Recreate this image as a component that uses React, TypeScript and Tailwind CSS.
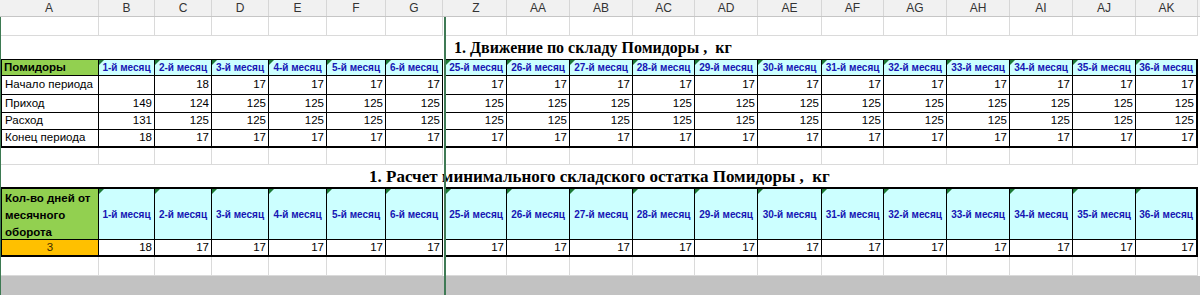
import React from "react";

type Col = { id: string; w: string; hw: string; month: string };

const leftCols: Col[] = [
  { id: "A", w: "w-[98px]", hw: "w-[99px]", month: "" },
  { id: "B", w: "w-[56px]", hw: "w-[56px]", month: "1-й месяц" },
  { id: "C", w: "w-[57px]", hw: "w-[57px]", month: "2-й месяц" },
  { id: "D", w: "w-[57px]", hw: "w-[57px]", month: "3-й месяц" },
  { id: "E", w: "w-[58px]", hw: "w-[58px]", month: "4-й месяц" },
  { id: "F", w: "w-[59px]", hw: "w-[59px]", month: "5-й месяц" },
  { id: "G", w: "w-[57px]", hw: "w-[57px]", month: "6-й месяц" },
];

const rightCols: Col[] = [
  { id: "Z", w: "w-[61px]", hw: "w-[61px]", month: "25-й месяц" },
  { id: "AA", w: "w-[63px]", hw: "w-[63px]", month: "26-й месяц" },
  { id: "AB", w: "w-[63px]", hw: "w-[63px]", month: "27-й месяц" },
  { id: "AC", w: "w-[62px]", hw: "w-[62px]", month: "28-й месяц" },
  { id: "AD", w: "w-[63px]", hw: "w-[63px]", month: "29-й месяц" },
  { id: "AE", w: "w-[64px]", hw: "w-[64px]", month: "30-й месяц" },
  { id: "AF", w: "w-[62px]", hw: "w-[62px]", month: "31-й месяц" },
  { id: "AG", w: "w-[63px]", hw: "w-[63px]", month: "32-й месяц" },
  { id: "AH", w: "w-[63px]", hw: "w-[63px]", month: "33-й месяц" },
  { id: "AI", w: "w-[63px]", hw: "w-[63px]", month: "34-й месяц" },
  { id: "AJ", w: "w-[63px]", hw: "w-[63px]", month: "35-й месяц" },
  { id: "AK", w: "w-[62px]", hw: "w-[62px]", month: "36-й месяц" },
];

const rep = (v: string, n: number) => Array.from({ length: n }, () => v);

// table 1 values, columns B..G then Z..AK
const movement = [
  { label: "Начало периода", values: ["", "18", ...rep("17", 16)] },
  { label: "Приход", values: ["149", "124", ...rep("125", 16)] },
  { label: "Расход", values: ["131", ...rep("125", 17)] },
  { label: "Конец периода", values: ["18", ...rep("17", 17)] },
];
const heights = ["h-[19px]", "h-[18px]", "h-[17px]", "h-[18px]"];

const minStock = ["18", ...rep("17", 17)];

function Corner() {
  return (
    <svg className="absolute left-0 top-0" width="5" height="5" viewBox="0 0 5 5">
      <polygon points="0,0 5,0 0,5" fill="#1d7a36" />
    </svg>
  );
}

// splits a row into left pane, freeze gap and right pane
function Panes({
  h,
  render,
}: {
  h: string;
  render: (col: Col, i: number, isLast: boolean) => React.ReactNode;
}) {
  return (
    <div className={`flex ${h}`}>
      {leftCols.map((c, i) => render(c, i, false))}
      <div className="w-[3px] shrink-0" />
      {rightCols.map((c, i) => render(c, i + leftCols.length, i === rightCols.length - 1))}
    </div>
  );
}

function GridRow({ h }: { h: string }) {
  return (
    <Panes
      h={h}
      render={(c) => (
        <div key={c.id} className={`${c.w} shrink-0 border-r border-b border-[#dadada]`} />
      )}
    />
  );
}

function TitleRow({ h, pad, size, text }: { h: string; pad: string; size: string; text: string }) {
  return (
    <div className={`${h} flex items-center ${pad}`}>
      <span
        className={`font-['Liberation_Serif','Times_New_Roman',serif] ${size} font-bold text-black whitespace-pre leading-none`}
      >
        {text}
      </span>
    </div>
  );
}

export default function App() {
  return (
    <div className="relative w-[1200px] h-[295px] overflow-hidden bg-white font-['Liberation_Sans',Arial,sans-serif] text-[11.5px] text-black">
      {/* Column letters */}
      <div className="flex h-[17px] bg-[#f1f1f1] border-b border-[#c6c6c6]">
        {leftCols.map((c) => (
          <div
            key={c.id}
            className={`${c.hw} shrink-0 border-r border-[#d6d6d6] flex items-center justify-center text-[12px] text-[#333]`}
          >
            {c.id}
          </div>
        ))}
        <div className="w-[3px] shrink-0" />
        {rightCols.map((c) => (
          <div
            key={c.id}
            className={`${c.hw} shrink-0 border-r border-[#d6d6d6] flex items-center justify-center text-[12px] text-[#333]`}
          >
            {c.id}
          </div>
        ))}
      </div>

      <div className="border-l border-[#3d7a52]">
        <GridRow h="h-[19px]" />
        <TitleRow
          h="h-[23px]"
          pad="pl-[453px]"
          size="text-[16px]"
          text="1. Движение по складу Помидоры ,  кг"
        />

        {/* Table 1 header */}
        <Panes
          h="h-[17px]"
          render={(c, i, last) =>
            i === 0 ? (
              <div
                key={c.id}
                className={`${c.w} shrink-0 bg-[#92d050] border border-black font-bold flex items-center pl-[2px]`}
              >
                Помидоры
              </div>
            ) : (
              <div
                key={c.id}
                className={`relative ${c.w} shrink-0 bg-[#ccffff] border-t border-b border-black ${
                  last ? "border-r-2" : "border-r"
                } flex items-center justify-center text-[10px] font-bold text-[#1616b4] whitespace-nowrap`}
              >
                <Corner />
                {c.month}
              </div>
            )
          }
        />

        {/* Table 1 body */}
        {movement.map((row, r) => (
          <Panes
            key={row.label}
            h={heights[r]}
            render={(c, i, last) => {
              const bottom = r === movement.length - 1 ? "border-b-2" : "border-b";
              if (i === 0)
                return (
                  <div
                    key={c.id}
                    className={`${c.w} shrink-0 border-l border-r ${bottom} border-black flex items-center pl-[3px] whitespace-nowrap`}
                  >
                    {row.label}
                  </div>
                );
              return (
                <div
                  key={c.id}
                  className={`${c.w} shrink-0 ${last ? "border-r-2" : "border-r"} ${bottom} border-black flex items-center justify-end pr-[2px]`}
                >
                  {row.values[i - 1]}
                </div>
              );
            }}
          />
        ))}

        <GridRow h="h-[17px]" />
        <TitleRow
          h="h-[22px]"
          pad="pl-[368px]"
          size="text-[17px]"
          text="1. Расчет минимального складского остатка Помидоры ,  кг"
        />

        {/* Table 2 header */}
        <Panes
          h="h-[53px]"
          render={(c, i, last) =>
            i === 0 ? (
              <div
                key={c.id}
                className={`${c.w} shrink-0 bg-[#92d050] border-l border-r border-t-2 border-b border-black font-bold leading-[17px] pl-[3px] pt-[1px]`}
              >
                Кол-во дней от
                <br />
                месячного
                <br />
                оборота
              </div>
            ) : (
              <div
                key={c.id}
                className={`relative ${c.w} shrink-0 bg-[#ccffff] border-t-2 border-b ${
                  last ? "border-r-2" : "border-r"
                } border-black flex items-center justify-center text-[10px] font-bold text-[#1616b4] whitespace-nowrap`}
              >
                <Corner />
                {c.month}
              </div>
            )
          }
        />

        {/* Table 2 body */}
        <Panes
          h="h-[17px]"
          render={(c, i, last) =>
            i === 0 ? (
              <div
                key={c.id}
                className={`${c.w} shrink-0 bg-[#ffc000] border-l border-r border-b-2 border-black flex items-center justify-center text-[#3d2800]`}
              >
                3
              </div>
            ) : (
              <div
                key={c.id}
                className={`${c.w} shrink-0 ${last ? "border-r-2" : "border-r"} border-b-2 border-black flex items-center justify-end pr-[2px]`}
              >
                {minStock[i - 1]}
              </div>
            )
          }
        />

        <GridRow h="h-[19px]" />
        <div className="h-[19px] bg-[#c2c2c2]" />
      </div>

      {/* Frozen pane divider */}
      <div className="absolute left-[444px] top-[17px] bottom-0 w-[2px] bg-[#3f7a55]" />
    </div>
  );
}
